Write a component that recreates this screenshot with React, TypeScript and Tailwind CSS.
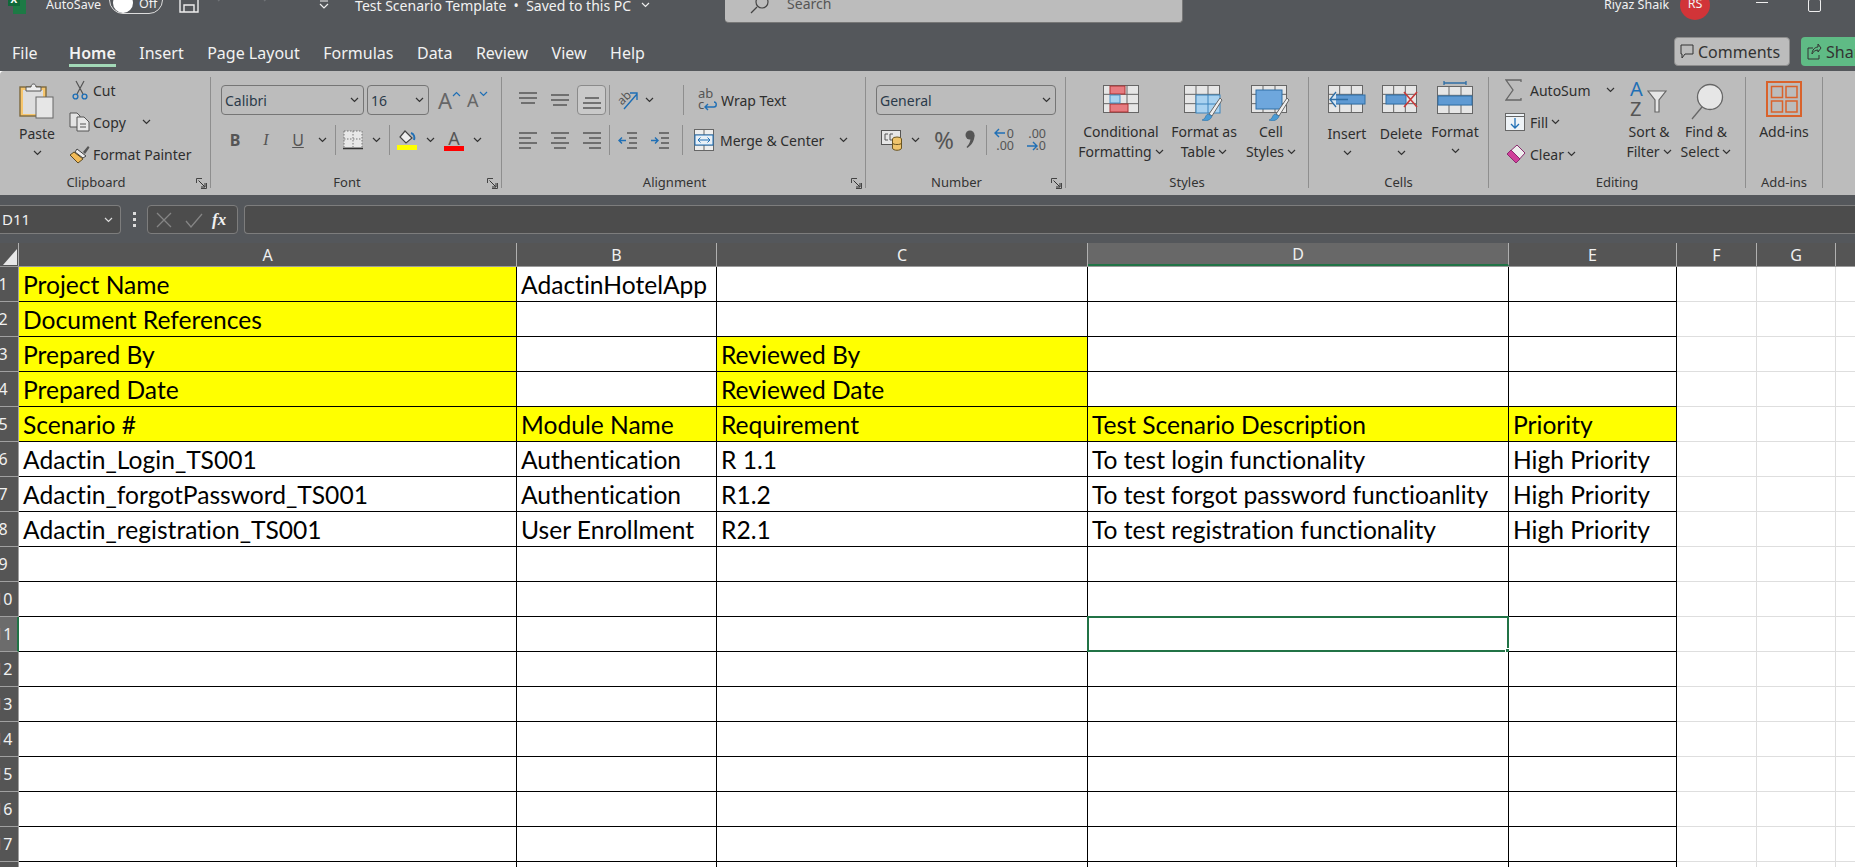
import type { ReactNode } from 'react';

const columns = [
  { name: 'A', width: 'w-[498px]' },
  { name: 'B', width: 'w-[200px]' },
  { name: 'C', width: 'w-[371px]' },
  { name: 'D', width: 'w-[421px]' },
  { name: 'E', width: 'w-[168px]' },
];

// yellow marks the cell fill: [text, filled]
type Cell = [string, boolean?];
const sheet: Cell[][] = [
  [['Project Name', true], ['AdactinHotelApp'], [''], [''], ['']],
  [['Document References', true], [''], [''], [''], ['']],
  [['Prepared By', true], [''], ['Reviewed By', true], [''], ['']],
  [['Prepared Date', true], [''], ['Reviewed Date', true], [''], ['']],
  [['Scenario #', true], ['Module Name', true], ['Requirement', true], ['Test Scenario Description', true], ['Priority', true]],
  [['Adactin_Login_TS001'], ['Authentication'], ['R 1.1'], ['To test login functionality'], ['High Priority']],
  [['Adactin_forgotPassword_TS001'], ['Authentication'], ['R1.2'], ['To test forgot password functioanlity'], ['High Priority']],
  [['Adactin_registration_TS001'], ['User Enrollment'], ['R2.1'], ['To test registration functionality'], ['High Priority']],
];

const Chevron = ({ className = '', color = '#333' }: { className?: string; color?: string }) => (
  <svg width="9" height="6" viewBox="0 0 9 6" className={`shrink-0 ${className}`}>
    <path d="M1 1l3.5 3.5L8 1" fill="none" stroke={color} strokeWidth="1.2" />
  </svg>
);

const Launcher = () => (
  <svg width="11" height="11" viewBox="0 0 11 11" className="absolute right-[3px] top-[3px]">
    <path d="M10.5 5v5.5H5M.5 5V.5H6" fill="none" stroke="#444" />
    <path d="M2.5 2.5l6 6M9 5v4H5" fill="none" stroke="#333" />
  </svg>
);

const Group = ({ width, label, launcher, children }: { width: string; label: string; launcher?: boolean; children: ReactNode }) => (
  <div className={`${width} shrink-0 h-[111px] border-r border-[#8e8e8e] flex flex-col`}>
    <div className="h-[98px]">{children}</div>
    <div className={`relative h-[13px] pt-[2px] flex items-center justify-center text-[13px] text-[#333] ${launcher ? 'pr-[18px]' : ''}`}>
      {label}
      {launcher && <Launcher />}
    </div>
  </div>
);

// generic gray spreadsheet grid used by the big ribbon icons
const GridBase = ({ w = 36, h = 28 }: { w?: number; h?: number }) => (
  <>
    <rect x=".5" y=".5" width={w - 1} height={h - 1} fill="#e6e6e6" stroke="#666" />
    <path d={`M${w / 3} 0v${h}M${(2 * w) / 3} 0v${h}M0 ${h / 3}h${w}M0 ${(2 * h) / 3}h${w}`} stroke="#666" />
  </>
);

const Brush = () => (
  <>
    <path d="M36 13L25 29l3 2 10-16z" fill="#eee" stroke="#666" />
    <path d="M24 29c-3 1-2 5-6 6 4 2 9 0 10-4z" fill="#4a9bd4" stroke="#2a6fa5" strokeWidth=".6" />
  </>
);

const PasteIcon = () => (
  <svg width="36" height="38" viewBox="0 0 36 38">
    <rect x="1" y="6" width="26" height="29" fill="#f7c66d" stroke="#7d6a3f" strokeWidth="1.4" />
    <rect x="4" y="9" width="20" height="24" fill="#dedede" />
    <path d="M7 10V6h5c0-4 5-4 5 0h5v4z" fill="#eee" stroke="#555" />
    <rect x="17" y="16" width="17" height="21" fill="#e6e6e6" stroke="#666" />
  </svg>
);

const CutIcon = () => (
  <svg width="16" height="20" viewBox="0 0 16 20">
    <path d="M4 1l7 13M12 1L5 14" stroke="#555" strokeWidth="1.2" fill="none" />
    <circle cx="3.5" cy="16.5" r="2.4" fill="none" stroke="#1f6fb5" strokeWidth="1.4" />
    <circle cx="12.5" cy="16.5" r="2.4" fill="none" stroke="#1f6fb5" strokeWidth="1.4" />
  </svg>
);

const CopyIcon = () => (
  <svg width="21" height="20" viewBox="0 0 21 20">
    <path d="M1 1h7l3 3v11H1z" fill="#e4e4e4" stroke="#555" />
    <path d="M8 5h7l5 5v9H8z" fill="#e8e8e8" stroke="#555" />
    <path d="M11 12h6M11 15h6" stroke="#555" />
  </svg>
);

const PainterIcon = () => (
  <svg width="21" height="19" viewBox="0 0 21 19">
    <path d="M14 7l5-6 1.500 1.500L16 9z" fill="#555" />
    <path d="M8 4l9 7-3 2L6 7z" fill="#eee" stroke="#444" />
    <path d="M5 7l9 7-5 4-8-8z" fill="#f2bb58" stroke="#5c4a22" />
  </svg>
);

const BorderIcon = () => (
  <svg width="20" height="20" viewBox="0 0 20 20">
    <rect x="1" y="1" width="18" height="16" fill="#e8e8e8" />
    <path d="M1 1h18v16M1 1v16M10 1v16M1 9h18" stroke="#777" strokeDasharray="1.5 1.5" fill="none" />
    <path d="M0 18.500h20" stroke="#333" strokeWidth="1.4" />
  </svg>
);

const FillIcon = () => (
  <svg width="20" height="20" viewBox="0 0 20 20">
    <path d="M8 1l7 7-6 5-6-6z" fill="#eee" stroke="#444" strokeWidth="1.200" />
    <path d="M14 3c3 1 4 4 3 7" fill="none" stroke="#1f6fb5" strokeWidth="2" />
    <rect x="0" y="15" width="20" height="5" fill="#ffff00" />
  </svg>
);

const Lines = ({ pattern }: { pattern: 'top' | 'mid' | 'bot' | 'left' | 'center' | 'right' | 'out' | 'in' }) => {
  const ds: Record<string, string> = {
    top: 'M1 2h18M1 7h18M3 12h14',
    mid: 'M1 4h18M1 9h18M3 14h14',
    bot: 'M3 7h14M1 12h18M1 17h18',
    left: 'M1 2h18M1 7h12M1 12h18M1 17h12',
    center: 'M1 2h18M4 7h12M1 12h18M4 17h12',
    right: 'M1 2h18M7 7h12M1 12h18M7 17h12',
    out: 'M9 2h10M11 7h8M11 12h8M9 17h10',
    in: 'M9 2h10M11 7h8M11 12h8M9 17h10',
  };
  return (
    <svg width="20" height="19" viewBox="0 0 20 19">
      <path d={ds[pattern]} stroke="#555" strokeWidth="1.300" fill="none" />
      {pattern === 'out' && <path d="M8 9.500H1M4 6.500l-3 3 3 3" stroke="#1f6fb5" strokeWidth="1.400" fill="none" />}
      {pattern === 'in' && <path d="M1 9.500h7M5 6.500l3 3-3 3" stroke="#1f6fb5" strokeWidth="1.400" fill="none" />}
    </svg>
  );
};

const OrientIcon = () => (
  <div className="relative w-[22px] h-[22px]">
    <span className="absolute left-0 top-[3px] text-[12px] leading-none -rotate-45 text-[#555]">ab</span>
    <svg width="22" height="22" viewBox="0 0 22 22" className="absolute left-0 top-0">
      <path d="M7 20L20 5M13 4h7v7" fill="none" stroke="#1f6fb5" strokeWidth="1.400" />
    </svg>
  </div>
);

const WrapIcon = () => (
  <div className="relative w-[18px] h-[24px] text-[13px] leading-[11px] text-[#555]">
    ab
    <br />c
    <svg width="14" height="10" viewBox="0 0 14 10" className="absolute left-[6px] top-[13px]">
      <path d="M1 6h9c3 0 3-5 0-5M4 3L1 6l3 3" fill="none" stroke="#1f6fb5" strokeWidth="1.400" />
    </svg>
  </div>
);

const MergeIcon = () => (
  <svg width="20" height="22" viewBox="0 0 20 22">
    <rect x=".5" y=".5" width="19" height="21" fill="#eee" stroke="#666" />
    <path d="M0 6h20M0 16h20M10 0v6M10 16v6" stroke="#666" />
    <rect x="1" y="6" width="18" height="10" fill="#e8f0f7" stroke="#1f6fb5" />
    <path d="M4 11h12M6.500 8.500L4 11l2.500 2.500M13.500 8.500L16 11l-2.500 2.500" fill="none" stroke="#1f6fb5" />
  </svg>
);

const AccountingIcon = () => (
  <svg width="22" height="21" viewBox="0 0 22 21">
    <rect x=".5" y=".5" width="19" height="14" fill="#e6e6e6" stroke="#555" />
    <path d="M7 4H4v6h3M12 4H9v6h3" fill="none" stroke="#555" />
    <ellipse cx="16" cy="9" rx="4.500" ry="2" fill="#efc46c" stroke="#6b5520" />
    <path d="M11.500 9v9c0 3 9 3 9 0V9" fill="#efc46c" stroke="#6b5520" />
    <path d="M11.500 13c0 2 9 2 9 0" fill="none" stroke="#6b5520" />
  </svg>
);

const CommaIcon = () => (
  <svg width="10" height="20" viewBox="0 0 10 20">
    <circle cx="5" cy="5" r="4.500" fill="#555" />
    <path d="M9.500 5c0 6-3 10-7 13l-1-1c3-3 4-6 4-9z" fill="#555" />
  </svg>
);

const DecimalIcon = ({ increase }: { increase?: boolean }) => (
  <div className="relative w-[20px] h-[24px] text-[12.500px] leading-[12px] text-[#555] text-right">
    {increase ? '0' : '.00'}
    <br />
    {increase ? '.00' : '.0'}
    <svg width="12" height="10" viewBox="0 0 12 10" className={`absolute left-0 ${increase ? 'top-0' : 'top-[13px]'}`}>
      {increase ? (
        <path d="M11 5H1M5 1L1 5l4 4" fill="none" stroke="#1f6fb5" strokeWidth="1.400" />
      ) : (
        <path d="M1 5h10M7 1l4 4-4 4" fill="none" stroke="#1f6fb5" strokeWidth="1.400" />
      )}
    </svg>
  </div>
);

const ConditionalIcon = () => (
  <svg width="36" height="28" viewBox="0 0 36 28">
    <GridBase />
    <rect x="7" y="1" width="15" height="8" fill="#e77b80" stroke="#a33" />
    <rect x="7" y="19" width="18" height="8" fill="#e77b80" stroke="#a33" />
    <rect x="7" y="10" width="10" height="8" fill="#a8d3ef" stroke="#4b8fc2" />
  </svg>
);

const TableStyleIcon = () => (
  <svg width="40" height="36" viewBox="0 0 40 36">
    <GridBase />
    <rect x="12" y="10" width="24" height="18" fill="#a9d2f0" stroke="#3a83bb" />
    <path d="M24 10v18M12 19h24" stroke="#3a83bb" />
    <Brush />
  </svg>
);

const CellStyleIcon = () => (
  <svg width="40" height="36" viewBox="0 0 40 36">
    <GridBase />
    <rect x="5" y="5" width="26" height="19" fill="#6ea7dd" stroke="#2f6ea5" />
    <Brush />
  </svg>
);

const InsertIcon = () => (
  <svg width="38" height="28" viewBox="0 0 38 28">
    <GridBase w={35} />
    <rect x="6" y="10" width="31" height="9" fill="#5f9ad3" stroke="#2f6ea5" />
    <path d="M20 14.500H2M8 7l-6 7.500L8 22" fill="#d7e6f3" stroke="#2f6ea5" strokeWidth="1.300" />
  </svg>
);

const DeleteIcon = () => (
  <svg width="38" height="28" viewBox="0 0 38 28">
    <GridBase w={35} />
    <rect x="4" y="10" width="20" height="9" fill="#5f9ad3" stroke="#2f6ea5" />
    <path d="M22 7l13 15M35 7L22 22" stroke="#c73a3a" strokeWidth="1.600" />
  </svg>
);

const FormatCellIcon = () => (
  <svg width="36" height="34" viewBox="0 0 36 34">
    <path d="M7 1v4M29 1v4M7 3h22" stroke="#2f6ea5" strokeWidth="1.300" />
    <g transform="translate(0 6)">
      <GridBase />
      <rect x="1" y="10" width="34" height="9" fill="#5f9ad3" stroke="#2f6ea5" />
    </g>
  </svg>
);

const SumIcon = () => (
  <svg width="17" height="22" viewBox="0 0 17 22">
    <path d="M16 3V1H1l7 10-7 10h15v-2" fill="none" stroke="#666" strokeWidth="1.300" />
  </svg>
);

const DownFillIcon = () => (
  <svg width="20" height="18" viewBox="0 0 20 18">
    <rect x=".5" y=".5" width="19" height="17" fill="#eef3f7" stroke="#666" />
    <path d="M0 3.500h20" stroke="#666" />
    <path d="M10 5v10M6 11l4 4 4-4" fill="none" stroke="#1f6fb5" strokeWidth="1.300" />
  </svg>
);

const EraserIcon = () => (
  <svg width="21" height="20" viewBox="0 0 21 20">
    <path d="M12 1l8 8-9 10-9-9z" fill="#eee" stroke="#8a2a6e" />
    <path d="M6 6l9 9-4 4-9-9z" fill="#d03f9a" stroke="#8a2a6e" />
  </svg>
);

const SortIcon = () => (
  <div className="relative w-[38px] h-[36px]">
    <span className="absolute left-0 top-[-2px] text-[20px] leading-[18px] text-[#1f6fb5]">A</span>
    <span className="absolute left-0 top-[18px] text-[20px] leading-[18px] text-[#555]">Z</span>
    <svg width="20" height="24" viewBox="0 0 20 24" className="absolute left-[17px] top-[8px]">
      <path d="M1 1h18l-7 9v12H8V10z" fill="#e6e6e6" stroke="#666" strokeWidth="1.200" />
    </svg>
  </div>
);

const FindIcon = () => (
  <svg width="38" height="38" viewBox="0 0 38 38">
    <circle cx="23" cy="15" r="12.500" fill="#e6e6e6" stroke="#666" strokeWidth="1.300" />
    <path d="M15 25L5 37" stroke="#666" strokeWidth="1.300" />
  </svg>
);

const AddinIcon = () => (
  <svg width="36" height="36" viewBox="0 0 36 36">
    <rect x="1" y="1" width="34" height="34" fill="none" stroke="#d9622b" strokeWidth="2" />
    <rect x="5.500" y="5.500" width="11" height="11" fill="none" stroke="#d9622b" strokeWidth="1.500" />
    <rect x="20" y="5.500" width="11" height="11" fill="none" stroke="#d9622b" strokeWidth="1.500" />
    <rect x="5.500" y="20" width="11" height="11" fill="none" stroke="#d9622b" strokeWidth="1.500" />
    <rect x="20" y="20" width="11" height="11" fill="none" stroke="#d9622b" strokeWidth="1.500" />
  </svg>
);

// big ribbon command: icon on top, one or two label lines under it
const BigButton = ({ width, icon, lines, chevronBelow, top = 'h-[43px]' }: { width: string; icon: ReactNode; lines: string[]; chevronBelow?: boolean; top?: string }) => (
  <div className={`${width} shrink-0 flex flex-col items-center text-[14px] leading-[20px]`}>
    <div className={`${top} flex items-start justify-center`}>{icon}</div>
    {lines.map((line, i) => (
      <div key={line} className="flex items-center gap-[3px] whitespace-nowrap">
        {line}
        {!chevronBelow && i === lines.length - 1 && <Chevron />}
      </div>
    ))}
    {chevronBelow && <Chevron className="mt-[6px]" />}
  </div>
);

const SelectBox = ({ width, text }: { width: string; text: string }) => (
  <div className={`${width} h-[30px] shrink-0 rounded-[4px] border border-[#757575] flex items-center justify-between pl-[3px] pr-[4px] text-[#2b3a4a] text-[14px]`}>
    {text}
    <Chevron />
  </div>
);

const Divider = ({ className = '' }: { className?: string }) => <div className={`w-px h-[30px] bg-[#8e8e8e] shrink-0 ${className}`} />;

function Ribbon() {
  return (
    <div className="h-[124px] shrink-0 bg-[#bcbcbc] rounded-tl-[4px] flex pt-[6px] text-[#2e2e2e] text-[14px] overflow-hidden">
      <Group width="w-[211px]" label="Clipboard" launcher>
        <div className="flex">
          <div className="ml-[19px] w-[36px] flex flex-col items-center mt-[4px]">
            <PasteIcon />
            <div className="mt-[5px] leading-[20px] text-[14px]">Paste</div>
            <Chevron className="mt-[6px]" />
          </div>
          <div className="ml-[14px] flex flex-col -mt-[3px]">
            <div className="h-[32px] flex items-center">
              <div className="ml-[3px] w-[21px]"><CutIcon /></div>
              <span>Cut</span>
            </div>
            <div className="h-[32px] flex items-center">
              <CopyIcon />
              <span className="ml-[3px]">Copy</span>
              <Chevron className="ml-[16px]" />
            </div>
            <div className="h-[32px] flex items-center">
              <PainterIcon />
              <span className="ml-[3px]">Format Painter</span>
            </div>
          </div>
        </div>
      </Group>

      <Group width="w-[291px]" label="Font" launcher>
        <div className="flex items-center mt-[8px] ml-[10px]">
          <SelectBox width="w-[143px]" text="Calibri" />
          <SelectBox width="w-[62px] ml-[3px]" text="16" />
          <div className="ml-[9px] flex items-start text-[22px] leading-[26px] text-[#666]">A<Chevron className="mt-[4px] rotate-180" color="#1f6fb5" /></div>
          <div className="ml-[6px] flex items-start text-[18px] leading-[26px] text-[#666]">A<Chevron className="mt-[4px]" color="#1f6fb5" /></div>
        </div>
        <div className="flex items-center mt-[10px] ml-[13px] h-[30px]">
          <span className="w-[22px] text-center font-bold text-[16px] text-[#555]">B</span>
          <span className="ml-[9px] w-[22px] text-center italic text-[16px] text-[#555] font-['Liberation_Serif',serif]">I</span>
          <span className="ml-[10px] w-[22px] text-center underline text-[16px] text-[#555]">U</span>
          <Chevron className="ml-[9px]" />
          <Divider className="ml-[8px]" />
          <div className="ml-[7px]"><BorderIcon /></div>
          <Chevron className="ml-[9px]" />
          <Divider className="ml-[8px]" />
          <div className="ml-[7px]"><FillIcon /></div>
          <Chevron className="ml-[9px]" />
          <div className="ml-[9px] w-[20px] flex flex-col items-center text-[18px] leading-[16px] text-[#555]">
            A
            <div className="w-[20px] h-[5px] bg-[#ff0000]" />
          </div>
          <Chevron className="ml-[9px]" />
        </div>
      </Group>

      <Group width="w-[364px]" label="Alignment" launcher>
        <div className="flex items-center mt-[8px] h-[30px] ml-[16px]">
          <Lines pattern="top" />
          <div className="ml-[12px]"><Lines pattern="mid" /></div>
          <div className="ml-[7px] w-[29px] h-[30px] rounded-[4px] border border-[#8a8a8a] bg-[#c9c9c9] flex items-center justify-center"><Lines pattern="bot" /></div>
          <Divider className="ml-[3px]" />
          <div className="ml-[7px]"><OrientIcon /></div>
          <Chevron className="ml-[6px]" />
          <Divider className="ml-[29px]" />
          <div className="ml-[14px]"><WrapIcon /></div>
          <span className="ml-[5px]">Wrap Text</span>
        </div>
        <div className="flex items-center mt-[10px] h-[30px] ml-[16px]">
          <Lines pattern="left" />
          <div className="ml-[12px]"><Lines pattern="center" /></div>
          <div className="ml-[12px]"><Lines pattern="right" /></div>
          <Divider className="ml-[7px]" />
          <div className="ml-[8px]"><Lines pattern="out" /></div>
          <div className="ml-[12px]"><Lines pattern="in" /></div>
          <Divider className="ml-[12px]" />
          <div className="ml-[11px]"><MergeIcon /></div>
          <span className="ml-[6px] w-[106px] whitespace-nowrap">Merge &amp; Center</span>
          <Chevron className="ml-[13px]" />
        </div>
      </Group>

      <Group width="w-[200px]" label="Number" launcher>
        <div className="mt-[8px] ml-[10px]"><SelectBox width="w-[180px]" text="General" /></div>
        <div className="flex items-center mt-[10px] h-[30px] ml-[15px]">
          <AccountingIcon />
          <Chevron className="ml-[8px]" />
          <span className="ml-[14px] text-[24px] leading-[30px] text-[#555]">%</span>
          <div className="ml-[11px]"><CommaIcon /></div>
          <Divider className="ml-[11px]" />
          <div className="ml-[7px]"><DecimalIcon increase /></div>
          <div className="ml-[12px]"><DecimalIcon /></div>
        </div>
      </Group>

      <Group width="w-[243px]" label="Styles">
        <div className="flex mt-[8px] ml-[5px]">
          <BigButton width="w-[100px]" top="h-[37px]" icon={<ConditionalIcon />} lines={['Conditional', 'Formatting']} />
          <BigButton width="w-[76px] ml-[-5px]" top="h-[37px]" icon={<TableStyleIcon />} lines={['Format as', 'Table']} />
          <BigButton width="w-[56px] ml-[1px]" top="h-[37px]" icon={<CellStyleIcon />} lines={['Cell', 'Styles']} />
        </div>
      </Group>

      <Group width="w-[180px]" label="Cells">
        <div className="flex mt-[8px] ml-[11px]">
          <BigButton width="w-[54px]" top="h-[39px]" icon={<InsertIcon />} lines={['Insert']} chevronBelow />
          <BigButton width="w-[54px]" top="h-[39px]" icon={<DeleteIcon />} lines={['Delete']} chevronBelow />
          <div className="-mt-[5px]">
            <BigButton width="w-[54px]" top="h-[42px]" icon={<FormatCellIcon />} lines={['Format']} chevronBelow />
          </div>
        </div>
      </Group>

      <Group width="w-[257px]" label="Editing">
        <div className="flex">
          <div className="ml-[16px] w-[116px] shrink-0 flex flex-col -mt-[3px]">
            <div className="h-[32px] flex items-center whitespace-nowrap">
              <div className="w-[25px] shrink-0"><SumIcon /></div>
              AutoSum
              <Chevron className="ml-[15px]" />
            </div>
            <div className="h-[32px] flex items-center">
              <div className="w-[25px] shrink-0"><DownFillIcon /></div>
              Fill
              <Chevron className="ml-[3px]" />
            </div>
            <div className="h-[32px] flex items-center">
              <div className="w-[25px] shrink-0"><EraserIcon /></div>
              Clear
              <Chevron className="ml-[3px]" />
            </div>
          </div>
          <div className="mt-[5px] flex">
            <BigButton width="w-[56px]" top="h-[40px]" icon={<SortIcon />} lines={['Sort &', 'Filter']} />
            <BigButton width="w-[58px]" top="h-[40px]" icon={<FindIcon />} lines={['Find &', 'Select']} />
          </div>
        </div>
      </Group>

      <Group width="w-[77px]" label="Add-ins">
        <div className="flex flex-col items-center mt-[4px] text-[14px] leading-[20px]">
          <div className="h-[41px]"><AddinIcon /></div>
          Add-ins
        </div>
      </Group>
    </div>
  );
}

function TitleBar() {
  return (
    <div className="h-[71px] shrink-0 bg-[#54575b] text-[#f2f2f2]">
      <div className="h-[37px] flex items-start text-[12.500px]">
        <div className="h-[10px] flex items-center ml-[8px]">
          <svg width="18" height="26" viewBox="0 0 18 26" className="shrink-0 -mt-[8px]">
            <rect x="5" y="0" width="13" height="26" fill="#1d7a45" />
            <rect x="0" y="4" width="12" height="14" fill="#10693a" />
            <text x="2.500" y="15" fontSize="10" fontWeight="700" fill="#fff">X</text>
          </svg>
          <span className="ml-[20px]">AutoSave</span>
          <div className="ml-[8px] -mt-[10px] w-[54px] h-[28px] rounded-full border border-[#ddd] flex items-center shrink-0 pl-[3px] pt-[8px]">
            <div className="w-[20px] h-[20px] rounded-full bg-white -mt-[2px]" />
            <span className="ml-[6px]">Off</span>
          </div>
          <svg width="20" height="24" viewBox="0 0 20 24" className="ml-[16px] shrink-0 -mt-[6px]">
            <path d="M1 1h15l3 3v18H1zM5 22v-7h10v7M5 3v5h9V3" fill="none" stroke="#eee" strokeWidth="1.400" />
          </svg>
          <svg width="90" height="24" viewBox="0 0 90 24" className="ml-[17px] shrink-0 -mt-[8px]">
            <path d="M2 12l10-8M26 6l-4 4-4-4M48 12l10-8M72 6l-4 4-4-4" fill="none" stroke="#6f7276" strokeWidth="1.300" />
          </svg>
          <svg width="10" height="10" viewBox="0 0 10 10" className="ml-[13px] shrink-0">
            <path d="M1 1h8M1 4l4 4 4-4" fill="none" stroke="#eee" strokeWidth="1.200" />
          </svg>
          <span className="ml-[26px] w-[283px] whitespace-nowrap text-[14px]">Test Scenario Template&nbsp; •&nbsp; Saved to this PC</span>
          <Chevron className="ml-[3px]" color="#eee" />
        </div>
        <div className="ml-[75px] w-[458px] h-[24px] -mt-[1px] bg-[#bcbcbc] rounded-b-[4px] border-b border-r border-[#777] flex items-start shrink-0 text-[#555] text-[14px] overflow-hidden">
          <svg width="20" height="18" viewBox="0 0 20 18" className="ml-[25px] shrink-0 -mt-[3px]">
            <circle cx="12" cy="6" r="6" fill="none" stroke="#444" strokeWidth="1.200" />
            <path d="M7 11l-6 6" stroke="#444" strokeWidth="1.200" />
          </svg>
          <span className="ml-[17px] leading-[16px] -mt-[3px]">Search</span>
        </div>
        <div className="h-[10px] flex items-center ml-[421px] text-[12.500px] whitespace-nowrap">
          <span className="w-[76px]">Riyaz Shaik</span>
          <div className="w-[30px] h-[30px] rounded-full bg-[#d13438] shrink-0 flex items-center justify-center -mt-[1px]">RS</div>
          <div className="ml-[46px] w-[12px] h-px bg-[#eee] -mt-[6px]" />
          <div className="ml-[40px] w-[13px] h-[13px] rounded-[2px] border border-[#eee] shrink-0" />
        </div>
      </div>
      <div className="h-[34px] flex items-start justify-between text-[16px]">
        <div className="flex gap-[23.500px] ml-[12px]">
          <div className="h-[30px] pt-[4px] mr-[8px]">File</div>
          <div className="h-[30px] pt-[4px] font-semibold border-b-[3px] border-[#a3d9b8]">Home</div>
          {['Insert', 'Page Layout', 'Formulas', 'Data', 'Review', 'View', 'Help'].map((tab) => (
            <div key={tab} className="h-[30px] pt-[4px]">{tab}</div>
          ))}
        </div>
        <div className="flex w-[181px] shrink-0 overflow-hidden">
          <div className="w-[116px] h-[29px] shrink-0 rounded-[4px] border border-[#8d8d8d] bg-[#bcbcbc] text-[#333] flex items-center pl-[5px] gap-[4px]">
            <svg width="14" height="16" viewBox="0 0 14 16" className="shrink-0"><path d="M1 1h12v9H5l-3 4v-4H1z" fill="none" stroke="#333" /></svg>
            Comments
          </div>
          <div className="ml-[11px] w-[70px] h-[29px] shrink-0 rounded-l-[4px] bg-[#5fbb85] text-[#333] flex items-center pl-[6px] gap-[4px]">
            <svg width="15" height="17" viewBox="0 0 15 17" className="shrink-0"><path d="M6 5H1v11h11v-4M5 11c0-4 3-7 6-7V1l3 4-3 4V7c-3 0-5 2-6 4z" fill="none" stroke="#333" /></svg>
            Share
          </div>
        </div>
      </div>
    </div>
  );
}

function FormulaBar() {
  return (
    <div className="h-[48px] shrink-0 bg-[#54575b] pt-[10px] flex items-start text-[#f0f0f0] text-[15px]">
      <div className="w-[121px] h-[29px] shrink-0 rounded-r-[4px] border border-l-0 border-[#7d7d7d] bg-[#4c4c4c] flex items-center justify-between pl-[2px] pr-[7px]">
        D11
        <Chevron color="#ddd" />
      </div>
      <div className="w-[26px] h-[29px] shrink-0 flex flex-col items-center justify-center gap-[3px]">
        <div className="w-[3px] h-[3px] bg-[#ddd]" />
        <div className="w-[3px] h-[3px] bg-[#ddd]" />
        <div className="w-[3px] h-[3px] bg-[#ddd]" />
      </div>
      <div className="w-[91px] h-[29px] shrink-0 rounded-[4px] border border-[#7d7d7d] bg-[#4c4c4c] flex items-center pl-[8px]">
        <svg width="50" height="16" viewBox="0 0 50 16">
          <path d="M1 1l14 14M15 1L1 15M30 9l5 6 11-13" fill="none" stroke="#858585" strokeWidth="1.300" />
        </svg>
        <span className="ml-[6px] italic font-bold text-[17px] font-['Liberation_Serif',serif]">fx</span>
      </div>
      <div className="ml-[6px] flex-1 h-[29px] rounded-l-[4px] border border-r-0 border-[#7d7d7d] bg-[#4c4c4c]" />
    </div>
  );
}

function ColumnHeaders() {
  return (
    <div className="h-[24px] shrink-0 flex bg-[#555555] border-b border-[#9a9a9a] text-[#f0f0f0] text-[16px]">
      <div className="w-[19px] shrink-0 border-r border-[#b0b0b0] relative overflow-hidden">
        <svg width="14" height="16" viewBox="0 0 14 16" className="absolute right-[1px] bottom-[1px]">
          <path d="M14 0v16H0z" fill="#e8e8e8" />
        </svg>
      </div>
      {columns.map((col) => (
        <div
          key={col.name}
          className={`${col.width} shrink-0 border-r border-[#b0b0b0] flex items-center justify-center ${col.name === 'D' ? 'bg-[#686868] border-b-2 border-b-[#217346]' : ''}`}
        >
          {col.name}
        </div>
      ))}
      <div className="w-[80px] shrink-0 border-r border-[#b0b0b0] flex items-center justify-center">F</div>
      <div className="w-[79px] shrink-0 border-r border-[#b0b0b0] flex items-center justify-center">G</div>
      <div className="flex-1" />
    </div>
  );
}

function SheetRow({ index }: { index: number }) {
  const cells = sheet[index - 1];
  const selected = index === 11;
  return (
    <div className="h-[35px] flex shrink-0">
      <div className={`w-[19px] shrink-0 overflow-hidden border-r border-b border-[#a0a0a0] ${selected ? 'bg-[#6c6c6c] border-r-2 border-r-[#217346]' : 'bg-[#555555]'} text-[#f0f0f0] text-[16px] flex items-center`}>
        <span className="block w-[18px] shrink-0 -ml-[6px] text-center">{index}</span>
      </div>
      {columns.map((col, c) => {
        const cell: Cell = cells ? cells[c] : [''];
        return (
          <div
            key={col.name}
            className={`${col.width} shrink-0 relative border-r border-b border-black flex items-center pl-[4px] pt-[2px] whitespace-nowrap text-[24.600px] [font-variant-ligatures:none] text-black font-['Lato',sans-serif] ${cell[1] ? 'bg-[#ffff00]' : 'bg-white'}`}
          >
            {cell[0]}
            {/* active cell outline and fill handle */}
            {selected && col.name === 'D' && (
              <div className="absolute -left-px -top-px -right-px -bottom-px border-2 border-[#217346]">
                <div className="absolute -right-[3px] -bottom-[3px] w-[5px] h-[5px] bg-[#217346] border border-white" />
              </div>
            )}
          </div>
        );
      })}
      <div className="w-[80px] shrink-0 border-r border-b border-[#dedede]" />
      <div className="w-[79px] shrink-0 border-r border-b border-[#dedede]" />
      <div className="flex-1 border-b border-[#dedede]" />
    </div>
  );
}

export default function App() {
  return (
    <div className="h-[867px] w-[1855px] overflow-hidden bg-white flex flex-col font-['Noto_Sans',sans-serif]">
      <TitleBar />
      <Ribbon />
      <FormulaBar />
      <ColumnHeaders />
      {Array.from({ length: 18 }, (_, i) => (
        <SheetRow key={i} index={i + 1} />
      ))}
    </div>
  );
}
